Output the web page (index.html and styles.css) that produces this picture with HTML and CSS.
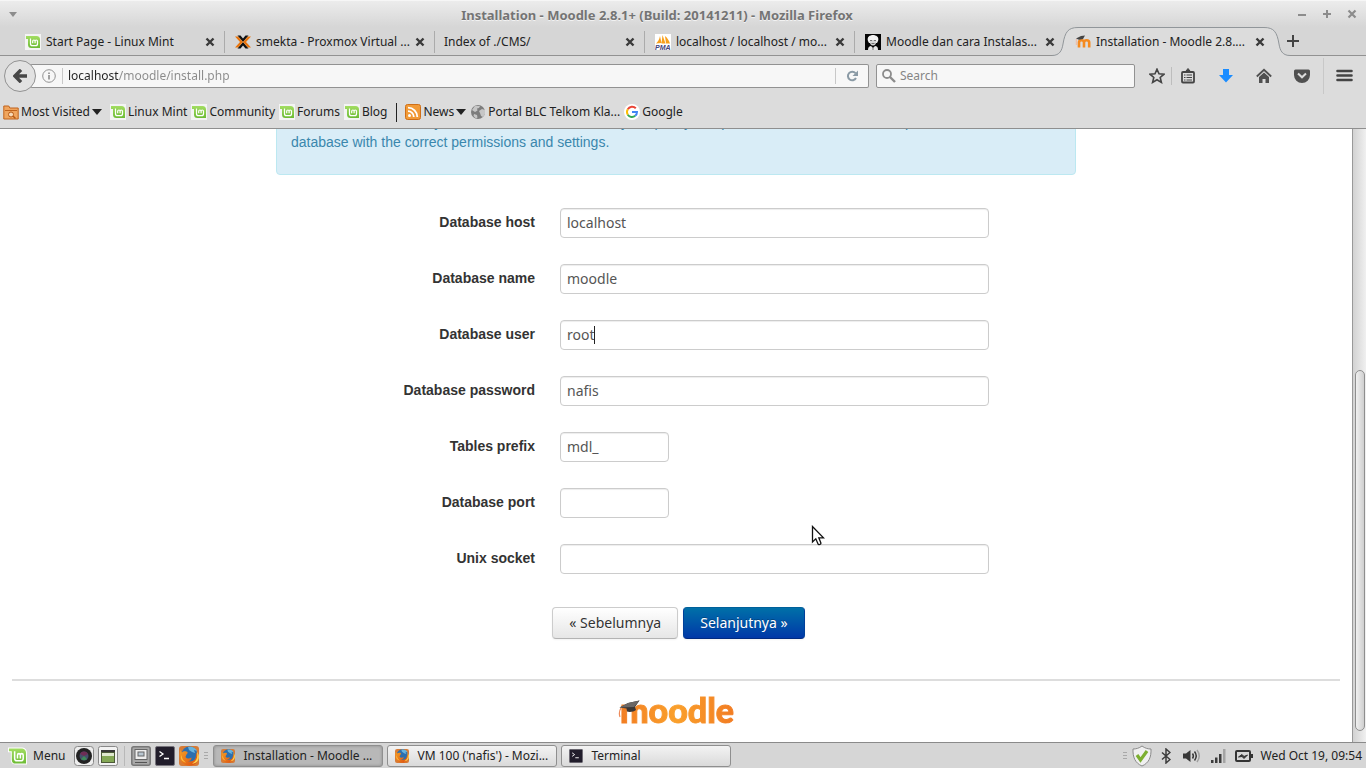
FILE: index.html
```html
<!DOCTYPE html>
<html lang="id">
<head>
<meta charset="utf-8">
<title>Installation - Moodle 2.8.1+ (Build: 20141211) - Mozilla Firefox</title>
<link rel="stylesheet" href="styles.css">
</head>
<body>
<svg class="defs" aria-hidden="true">
  <defs>
    <linearGradient id="g-mint" x1="0" y1="0" x2="0" y2="1"><stop offset="0" stop-color="#a3dd62"/><stop offset="1" stop-color="#6dbb35"/></linearGradient>
    <linearGradient id="g-fox" x1="0" y1="0" x2="1" y2="1"><stop offset="0" stop-color="#f7a325"/><stop offset="1" stop-color="#d9480f"/></linearGradient>
    <symbol id="mint" viewBox="0 0 16 16">
      <rect width="16" height="16" fill="#f4f4f4"/>
      <path d="M1 2h10.500a3.500 3.500 0 0 1 3.500 3.500V14H6.500A3.500 3.500 0 0 1 3 10.500V5H1z" fill="url(#g-mint)"/>
      <path d="M5.500 4.500v5.200a2 2 0 0 0 2 2h3a2 2 0 0 0 2-2V7.200a1.200 1.200 0 0 0-2.400 0v2M10.100 9.200v-2a1.200 1.200 0 0 0-2.400 0v2" fill="none" stroke="#fff" stroke-width="1.200"/>
    </symbol>
    <symbol id="firefox" viewBox="0 0 20 20">
      <rect width="20" height="20" rx="3" fill="#d77b35"/>
      <circle cx="10.500" cy="8.500" r="8" fill="#2c6fae"/>
      <path d="M9 1c4-1 8 1 9 4l-3-1 1 3-3-1-3-2z" fill="#67b4dd"/>
      <path d="M1.500 3c0 2 .5 3 1.500 3.500C4 5 6 5 7.500 5.500 9 6 9 7.500 7.500 8.500L6.500 11c1.500 2 4 2 6 .5 0 3-2 3.500-4 3.500 5 1.500 8-1 8.500-5 .5-2 0-3-.5-4 3 3 3.500 7 1 10.500-3 4-10 4.500-14 .5C0 13.500.2 7 1.500 3z" fill="url(#g-fox)"/>
      <path d="M17.500 5c2 5 .5 10-4.500 12.500 5 .5 8-5 6.500-9z" fill="#ffd34e"/>
      <path d="M2.500 9c.2 3 1.500 6 4.500 7.500C3 16 .8 12.500 2.500 9z" fill="#ffc03d"/>
    </symbol>
    <symbol id="close" viewBox="0 0 10 10"><path d="M1.500 1.500l7 7M8.500 1.500l-7 7" stroke="#3a3a3a" stroke-width="2.400"/></symbol>
    <symbol id="terminal" viewBox="0 0 20 20">
      <rect x=".5" y=".5" width="19" height="19" rx="1.500" fill="#211d2b" stroke="#77747c"/>
      <path d="M4.500 5.500l3.500 2.500-3.500 2.500M9 12.500h5" fill="none" stroke="#fff" stroke-width="1.300"/>
    </symbol>
    <symbol id="down" viewBox="0 0 10 6"><path d="M0 0h10L5 6z" fill="currentColor"/></symbol>
  </defs>
</svg>

<header class="titlebar">
  <svg class="winmenu" viewBox="0 0 10 6"><use href="#down"/></svg>
  <h1 class="wintitle">Installation - Moodle 2.8.1+ (Build: 20141211) - Mozilla Firefox</h1>
  <div class="winbtns">
    <button aria-label="Minimize"><svg viewBox="0 0 10 10"><path d="M1 6h8" stroke="currentColor" stroke-width="2"/></svg></button>
    <button aria-label="Maximize"><svg viewBox="0 0 10 10"><path d="M1 5h8M5 1v8" stroke="currentColor" stroke-width="2"/></svg></button>
    <button aria-label="Close"><svg viewBox="0 0 10 10"><path d="M1.500 1.500l7 7M8.500 1.500l-7 7" stroke="currentColor" stroke-width="2.200"/></svg></button>
  </div>
</header>

<nav class="tabs" aria-label="Tabs">
  <div class="tab"><svg class="fav"><use href="#mint"/></svg><span class="tabname">Start Page - Linux Mint</span><button class="x" aria-label="Close tab"><svg><use href="#close"/></svg></button></div>
  <div class="tab"><svg class="fav" viewBox="0 0 16 16"><path d="M2.500 1.500h3L8 4.500l2.500-3h3L8 8zM2.500 14.500h3L8 11.500l2.500 3h3L8 8z" fill="#111"/><path d="M0 2.500h3L8 8l-5 5.500H0L5 8zM16 2.500h-3L8 8l5 5.500h3L11 8z" fill="#e8740c"/></svg><span class="tabname">smekta - Proxmox Virtual ...</span><button class="x" aria-label="Close tab"><svg><use href="#close"/></svg></button></div>
  <div class="tab"><span class="tabname">Index of ./CMS/</span><button class="x" aria-label="Close tab"><svg><use href="#close"/></svg></button></div>
  <div class="tab"><svg class="fav" viewBox="0 0 16 16"><rect width="16" height="16" fill="#fff"/><path d="M1 9.500C3 8 4.500 5 5 2l1.500 7zM6.500 9.500L7.500 1l3 8.500zM10 2c2.500 2 4 4.500 5 7.500h-4z" fill="#f8a01c"/><text x="0" y="15.500" class="pma">PMA</text></svg><span class="tabname">localhost / localhost / mo...</span><button class="x" aria-label="Close tab"><svg><use href="#close"/></svg></button></div>
  <div class="tab"><svg class="fav" viewBox="0 0 16 16"><rect width="16" height="16" fill="#050505"/><path d="M3 7C1.500 3 5 1 8 1s6.500 2 5 6l-1 2H4z" fill="#f3f3f3"/><path d="M4.500 6.500h7c0 3-1.500 5-3.500 5s-3.500-2-3.500-5z" fill="#d4d4d4"/><path d="M5 6.500h2.200M8.800 6.500H11M6.500 9.500h3" stroke="#555" stroke-width=".8"/><path d="M3 16c0-3 1.500-4 3-4l2 2 2-2c2 0 3 1 3 4z" fill="#e4e4e4"/><path d="M8 13v3" stroke="#777"/></svg><span class="tabname">Moodle dan cara Instalas...</span><button class="x" aria-label="Close tab"><svg><use href="#close"/></svg></button></div>
  <div class="tab active">
    <svg class="shape" viewBox="0 0 238 29"><path d="M0 28.500C8 28.500 10 23 11 17 13 5 16 .5 26 .5H212C222 .5 225 5 227 17 228 23 230 28.500 238 28.500V29H0z" fill="#dcdcdc"/><path d="M0 28.500C8 28.500 10 23 11 17 13 5 16 .5 26 .5H212C222 .5 225 5 227 17 228 23 230 28.500 238 28.500" fill="none" stroke="#91969a"/></svg>
    <svg class="fav" viewBox="0 0 16 16"><path d="M4 13.500V8.500c0-3 5-3 5 0v5M9 8.500c0-3 5.200-3 5.200 0v5" fill="none" stroke="#f58a1f" stroke-width="2.600"/><path d="M1 4.500L6 2l4-.5L8 5l-4 .8z" fill="#444"/><path d="M1.300 5v6" stroke="#f3b9a0"/></svg><span class="tabname">Installation - Moodle 2.8....</span><button class="x" aria-label="Close tab"><svg><use href="#close"/></svg></button></div>
  <button class="newtab" aria-label="New tab"><svg viewBox="0 0 12 12"><path d="M0 6h12M6 0v12" stroke="#444" stroke-width="2"/></svg></button>
</nav>

<div class="navbar">
  <button class="back" aria-label="Back"><svg viewBox="0 0 14 14"><path d="M8 .8L2 7l6 6.200M2 7h12" fill="none" stroke="#474747" stroke-width="3.400"/></svg></button>
  <div class="urlbox">
    <svg class="info" viewBox="0 0 14 14"><circle cx="7" cy="7" r="6.300" fill="none" stroke="#929292"/><path d="M7 6v4.500M7 3.500v1.500" stroke="#8a8a8a" stroke-width="1.600"/></svg>
    <input class="url" type="text" aria-label="Address" value="localhost/moodle/install.php">
    <button class="reload" aria-label="Reload"><svg viewBox="0 0 12 12"><path d="M9.500 3.200A4.300 4.300 0 1 0 10 8" fill="none" stroke="#8a9aa5" stroke-width="2"/><path d="M12 .5V6H6.500z" fill="#8a9aa5"/></svg></button>
  </div>
  <div class="searchbox">
    <svg viewBox="0 0 14 14"><circle cx="5" cy="5" r="4" fill="none" stroke="#8c8c8c" stroke-width="1.800"/><path d="M8 8l5 5" stroke="#8c8c8c" stroke-width="2.400"/></svg>
    <input type="text" aria-label="Search" placeholder="Search">
  </div>
  <div class="tools">
    <button class="star" aria-label="Bookmark"><svg viewBox="0 0 16 16"><path d="M8 1.200l2 4.600 5 .4-3.800 3.300 1.200 4.900L8 11.800l-4.400 2.600 1.200-4.900L1 6.200l5-.4z" fill="none" stroke="#444" stroke-width="1.600"/></svg></button>
    <button aria-label="Bookmarks list"><svg viewBox="0 0 16 16"><rect x="2" y="4" width="12" height="10.500" rx="1" fill="none" stroke="#444" stroke-width="1.800"/><path d="M6 3l2-2.500L10 3z" stroke="#444" fill="#444"/><path d="M4 7h1.500M4 9.500h1.500M4 12h1.500M6.500 7H12M6.500 9.500H12M6.500 12H12" stroke="#444" stroke-width="1.200"/></svg></button>
    <button aria-label="Downloads"><svg viewBox="0 0 16 16"><path d="M5 1h6v6h4l-7 7.500L1 7h4z" fill="#1a8cff"/></svg></button>
    <button aria-label="Home"><svg viewBox="0 0 16 16"><path d="M.8 8.500L8 1.800l7.200 6.700" fill="none" stroke="#505050" stroke-width="1.800"/><path d="M3 9l5-4.600L13 9v6H9.500v-4h-3v4H3z" fill="#505050"/></svg></button>
    <button aria-label="Pocket"><svg viewBox="0 0 16 16"><path d="M1.500 1.500h13a1.500 1.500 0 0 1 1.500 1.500v4a8 8 0 0 1-16 0V3a1.500 1.500 0 0 1 1.500-1.500z" fill="#505050"/><path d="M4 5.500L8 9.300l4-3.800" fill="none" stroke="#dcdcdc" stroke-width="2"/></svg></button>
    <button class="menu" aria-label="Open menu"><svg viewBox="0 0 16 16"><path d="M1 3h14M1 7.500h14M1 12h14" stroke="#444" stroke-width="2.600" stroke-linecap="round"/></svg></button>
  </div>
</div>

<nav class="bookmarks" aria-label="Bookmarks">
  <button class="bm first"><svg viewBox="0 0 16 16"><path d="M.8 15V2h5l1 2h8.400v11z" fill="#f0a55e" stroke="#c0631c"/><path d="M2 6.500h12" stroke="#c0631c"/><circle cx="8" cy="10.500" r="2.500" fill="#f7d9b8" stroke="#b75a15"/><path d="M10 12l2.500 2.500" stroke="#b75a15" stroke-width="1.500"/></svg>Most Visited<svg class="dd"><use href="#down"/></svg></button>
  <a class="bm" href="#"><svg><use href="#mint"/></svg>Linux Mint</a>
  <a class="bm" href="#"><svg><use href="#mint"/></svg>Community</a>
  <a class="bm" href="#"><svg><use href="#mint"/></svg>Forums</a>
  <a class="bm" href="#"><svg><use href="#mint"/></svg>Blog</a>
  <span class="bmsep"></span>
  <button class="bm news"><svg viewBox="0 0 16 16"><rect x=".5" y=".5" width="15" height="15" rx="2" fill="#f19a37" stroke="#cf6e17"/><circle cx="4.500" cy="11.500" r="1.500" fill="#fff"/><path d="M3 7.200A5.800 5.800 0 0 1 8.800 13M3 3.700A9.300 9.300 0 0 1 12.300 13" fill="none" stroke="#fff" stroke-width="1.800"/></svg>News<svg class="dd"><use href="#down"/></svg></button>
  <a class="bm" href="#"><svg viewBox="0 0 16 16"><circle cx="8" cy="8" r="7" fill="#7d7d7d"/><path d="M5 1.800l5 .2-1 2-2 .5.5 2L5 8 2 6zM9 7l3-2 3 1v4l-2 3-2-1-1-3zM4 10l3 1 .5 2.500L6 14.500 3.500 12z" fill="#c6c6c6"/></svg>Portal BLC Telkom Kla...</a>
  <a class="bm" href="#"><svg viewBox="0 0 16 16"><circle cx="8" cy="8" r="8" fill="#fff"/><path d="M3.800 5.300A5 5 0 0 1 11.800 4.300" fill="none" stroke="#ea4335" stroke-width="2"/><path d="M3.800 5.300a5 5 0 0 0 0 5.400" fill="none" stroke="#fbbc05" stroke-width="2"/><path d="M3.800 10.700a5 5 0 0 0 7.400 1.100" fill="none" stroke="#34a853" stroke-width="2"/><path d="M8 8h5a5 5 0 0 1-1.800 3.800" fill="none" stroke="#4285f4" stroke-width="2"/></svg>Google</a>
</nav>

<div class="viewport">
  <main class="page">
    <div class="alert">If the database currently does not exist, and the user you specify has permission, Moodle will attempt to create a new database with the correct permissions and settings.</div>
    <form class="form">
      <label for="host">Database host</label><div class="field"><input id="host" type="text" value="localhost"></div>
      <label for="name">Database name</label><div class="field"><input id="name" type="text" value="moodle"></div>
      <label for="user">Database user</label><div class="field"><input id="user" type="text" value="root"><span class="caret"></span></div>
      <label for="pass">Database password</label><div class="field"><input id="pass" type="text" value="nafis"></div>
      <label for="prefix">Tables prefix</label><div class="field short"><input id="prefix" type="text" value="mdl_"></div>
      <label for="port">Database port</label><div class="field short"><input id="port" type="text"></div>
      <label for="socket">Unix socket</label><div class="field"><input id="socket" type="text"></div>
    </form>
    <div class="actions">
      <button class="btn">« Sebelumnya</button>
      <button class="btn primary">Selanjutnya »</button>
    </div>
    <footer class="foot">
      <a class="logo" href="#">moodle<svg class="cap" viewBox="0 0 22 18"><path d="M1.500 7.500L10 3 21.500 .5 17 7l1 3c-2 2-7 2.500-9 1.500l-.5-3z" fill="#3b3735"/><path d="M1.500 7.500L10 3l11.500-2.500L16 7z" fill="#6b6765"/><path d="M3 8c-2 3-2 6-1 9" fill="none" stroke="#ee8a5a" stroke-width="1.200"/></svg></a>
    </footer>
  </main>
  <div class="scroll"><div class="thumb"></div></div>
  <svg class="cursor" viewBox="0 0 14 21"><path d="M1.500 1.500V17l3.300-3.200 2.400 5.400c1.500 1 3-.2 2.600-1.500L7.800 12.800h4.700z" fill="#fff" stroke="#111" stroke-width="1.300"/></svg>
</div>

<footer class="taskbar">
  <button class="start"><svg viewBox="0 0 20 18"><path d="M0 0h13.500C18 0 20 2 20 6v12H8c-3.500 0-5-2-5-5V5H0z" fill="#fff"/><path d="M1 1h12.500C17.500 1 19 3 19 6v11H8c-3 0-4-1.500-4-4V4H1z" fill="url(#g-mint)"/><path d="M7 4v7.500c0 1.500 1 2.500 2.500 2.500h4c1.500 0 2.500-1 2.500-2.500V8c0-2-3-2-3 0v3.500M13 8c0-2-3-2-3 0v3.500" fill="none" stroke="#fff" stroke-width="1.600"/></svg>Menu</button>
  <div class="launch">
    <button aria-label="Camera"><svg viewBox="0 0 20 20"><rect x=".5" y=".5" width="19" height="19" rx="3" fill="#eee" stroke="#888"/><circle cx="10" cy="10" r="8" fill="#222"/><circle cx="10" cy="10" r="4.500" fill="#46506a"/><path d="M6 8a4.500 4.500 0 0 1 8 0l-4 2z" fill="#6f2d55"/><path d="M7 13a4.500 4.500 0 0 0 6 0l-3-3z" fill="#3e8b59"/></svg></button>
    <button aria-label="Show desktop"><svg viewBox="0 0 20 20"><rect x=".5" y=".5" width="19" height="19" rx="2" fill="#f2f2f2" stroke="#888"/><rect x="3" y="4" width="14" height="3" fill="#373737"/><rect x="3.500" y="6.500" width="13" height="10" fill="#dfe8cf" stroke="#4c5a38"/><rect x="4" y="10" width="12" height="6" fill="#84a856"/></svg></button>
  </div>
  <span class="tsep"></span>
  <div class="launch">
    <button aria-label="Files"><svg viewBox="0 0 20 20"><rect x=".8" y=".8" width="18.400" height="18.400" rx="2" fill="#a8a8a8" stroke="#777" stroke-width="1.500"/><rect x="4" y="3.500" width="12" height="10" fill="#eee" stroke="#666"/><rect x="7" y="6" width="6" height="4" fill="#b9c7d2" stroke="#666"/><path d="M4 16.500h12" stroke="#555"/></svg></button>
    <button aria-label="Terminal"><svg><use href="#terminal"/></svg></button>
    <button aria-label="Firefox"><svg><use href="#firefox"/></svg></button>
  </div>
  <span class="grip"></span>
  <div class="tasks">
    <button class="task on"><svg><use href="#firefox"/></svg>Installation - Moodle ...</button>
    <button class="task"><svg><use href="#firefox"/></svg>VM 100 ('nafis') - Mozi...</button>
    <button class="task"><svg><use href="#terminal"/></svg>Terminal</button>
  </div>
  <div class="tray">
    <span class="grip"></span>
    <svg class="shield" viewBox="0 0 20 22"><path d="M10 1c3 2.300 6 3 9 3 .3 8-2 14-9 17C3 18 .7 12 1 4c3 0 6-.7 9-3z" fill="#f0f0f0" stroke="#8a8a8a"/><path d="M5 10l3.500 5L15 6" fill="none" stroke="#7caf30" stroke-width="3.200"/></svg>
    <svg class="bt" viewBox="0 0 10 16"><path d="M1 4.500l8 7L5 15V1l4 3.500-8 7" fill="none" stroke="#3c3c3c" stroke-width="1.500"/></svg>
    <svg class="vol" viewBox="0 0 18 14"><path d="M0 4.500h3L7.500 1v12L3 9.500H0z" fill="#383838"/><path d="M9.500 4.500q1.800 2.500 0 5M11.500 2.500q3.500 4.500 0 9" fill="none" stroke="#383838" stroke-width="1.500"/><path d="M14 1q4.500 6 0 12" fill="none" stroke="#a0a0a0" stroke-width="1.500"/></svg>
    <svg class="sig" viewBox="0 0 15 14"><path d="M0 11h2.500v3H0zM4 8.500h2.500V14H4zM8 5h2.500v9H8z" fill="#3c3c3c"/><path d="M12 0h2.500v14H12z" fill="#a4a4a4"/></svg>
    <svg class="bat" viewBox="0 0 18 12"><rect x="1" y="1" width="14" height="10" rx="1" fill="none" stroke="#333" stroke-width="2"/><path d="M16 4h2v4h-2z" fill="#333"/><path d="M3.500 7L7 4.500 9 6.500 12.500 5 9 8.500l-2-2z" fill="#333" stroke="#333"/></svg>
    <time>Wed Oct 19, 09:54</time>
  </div>
</footer>
</body>
</html>
```
FILE: styles.css
```css
* { box-sizing: border-box; }
body {
  margin: 0;
  height: 100vh;
  display: flex;
  flex-direction: column;
  overflow: hidden;
  background: #dcdcdc;
  color: #222;
  font: 12px/16px "Noto Sans", sans-serif;
}
button {
  font: inherit;
  color: inherit;
  background: none;
  border: 0;
  padding: 0;
  display: flex;
  align-items: center;
  justify-content: center;
}
a { color: inherit; text-decoration: none; }
input { font: inherit; border: 0; outline: 0; background: none; padding: 0; min-width: 0; }
svg { display: block; flex: none; }
.defs { position: absolute; width: 0; height: 0; }

/* Window frame */
.titlebar {
  flex: none;
  height: 27px;
  display: grid;
  grid-template-columns: 70px 1fr 70px;
  align-items: center;
  background: linear-gradient(#ececec, #d6d6d6);
  border-top: 1px solid #f6f6f6;
  color: #8c8c8c;
}
.winmenu { width: 8px; height: 5px; margin-left: 9px; }
.wintitle {
  margin: 2px 0 0;
  padding-right: 52px;
  font-size: 13px;
  font-weight: 700;
  line-height: 20px;
  text-align: center;
  color: #747474;
  text-shadow: 0 1px 0 #f2f2f2;
  white-space: nowrap;
}
.winbtns { display: flex; gap: 15px; justify-content: flex-end; padding-right: 9px; }
.winbtns svg { width: 10px; height: 10px; }

/* Tabs */
.tabs {
  flex: none;
  height: 29px;
  display: flex;
  padding-left: 15px;
  background: #d6d6d6;
  border-bottom: 1px solid #929292;
}
.tab {
  position: relative;
  flex: 0 1 210px;
  min-width: 0;
  display: flex;
  align-items: center;
  padding: 1px 10px 0 10px;
}
.tab::after {
  content: "";
  position: absolute;
  right: 0;
  top: 4px;
  bottom: 2px;
  width: 1px;
  background: #ababab;
}
.tab:nth-child(5)::after, .tab.active::after { display: none; }
.tab:nth-child(3) { padding-left: 9px; }
.fav { position: relative; width: 16px; height: 16px; margin-right: 5px; }
.pma { font: italic bold 7px "Liberation Sans", sans-serif; fill: #44427a; }
.tabname { position: relative; flex: 1; min-width: 0; white-space: nowrap; }
.x { position: relative; }
.x svg { width: 10px; height: 10px; }
.shape { position: absolute; left: -13px; top: 0; width: 238px; height: 29px; }
.newtab { margin-left: 12px; }
.newtab svg { width: 12px; height: 12px; }

/* Navigation */
.navbar {
  flex: none;
  height: 40px;
  display: flex;
  align-items: center;
  padding: 0 1px 0 4px;
}
.back {
  position: relative;
  width: 32px;
  height: 32px;
  border: 1px solid #929292;
  border-radius: 50%;
  background: #e2e2e2;
}
.back svg { width: 14px; height: 14px; }
.urlbox, .searchbox {
  height: 24px;
  display: flex;
  align-items: center;
  background: #f7f7f7;
  border: 1px solid #929292;
  border-radius: 2px;
}
.urlbox { flex: 1; margin-left: -6px; padding-left: 12px; border-left: 0; }
.info { width: 14px; height: 14px; margin-right: 6px; }
.url {
  flex: 1;
  height: 16px;
  border-left: 1px solid #c8c8c8;
  padding-left: 5px;
}
.urlbox .url {
  background: linear-gradient(90deg, #222 56px, #8a8a8a 56px);
  -webkit-background-clip: text;
  background-clip: text;
  -webkit-text-fill-color: transparent;
}
.reload { width: 33px; height: 16px; border-left: 1px solid #c8c8c8; }
.reload svg { width: 12px; height: 12px; }
.searchbox { width: 259px; margin-left: 7px; padding-left: 5px; }
.searchbox svg { width: 14px; height: 14px; margin-right: 4px; }
.searchbox input { flex: 1; }
.searchbox input::placeholder { color: #858585; opacity: 1; }
.tools { display: flex; align-items: center; margin-left: 7px; }
.tools button { width: 38px; height: 36px; }
.tools svg { width: 16px; height: 16px; }
.tools .star { width: 30px; height: 18px; border-right: 1px solid #bdbdbd; }
.tools .star + button { width: 32px; margin-right: 3px; }
.tools .menu { width: 42px; margin-left: 2px; border-left: 1px solid #c8c8c8; }
.tools .menu svg { width: 17px; }

/* Bookmarks */
.bookmarks {
  flex: none;
  height: 33px;
  display: flex;
  align-items: center;
  padding: 0 3px;
  border-bottom: 1px solid #8f8f8f;
  line-height: 18px;
  white-space: nowrap;
}
.bm { display: flex; align-items: center; margin-right: 4px; }
.bm svg { width: 16px; height: 16px; margin-right: 2px; }
.bm .dd { width: 10px; height: 6px; margin: 0 0 0 2px; }
.bm.first { margin-right: 8px; }
.bmsep { width: 1px; height: 19px; margin: 0 8px 0 5px; background: #222; }

/* Web page */
.viewport {
  position: relative;
  flex: 1;
  min-height: 0;
  display: flex;
  overflow: hidden;
  background: #fff;
}
.page {
  flex: 1;
  display: flex;
  flex-direction: column;
  justify-content: flex-end;
  padding: 0 12px 16px;
  font: 14px/20px "Liberation Sans", Arial, sans-serif;
}
.alert {
  width: 800px;
  margin: 0 auto 33px;
  padding: 8px 14px 22px;
  color: #3a87ad;
  background: #d9edf7;
  border: 1px solid #bce8f1;
  border-radius: 4px;
}
.form {
  display: grid;
  grid-template-columns: 259px 429px;
  gap: 26px 25px;
  width: 800px;
  margin: 0 auto;
}
.form label {
  padding-top: 4px;
  font-weight: 700;
  text-align: right;
  color: #333;
}
.field { position: relative; height: 30px; }
.field input {
  width: 100%;
  height: 30px;
  padding: 0 6px 2px;
  font: 14px/20px "Noto Sans", sans-serif;
  color: #555;
  background: #fff;
  border: 1px solid #ccc;
  border-radius: 4px;
  box-shadow: inset 0 1px 1px rgba(0, 0, 0, .075);
}
.short { width: 109px; }
.caret { position: absolute; left: 34px; top: 6px; width: 1px; height: 18px; background: #222; }
.actions { display: flex; justify-content: center; gap: 5px; padding: 33px 0 40px 5px; }
.btn {
  height: 32px;
  padding: 0 16px;
  border: 1px solid #ccc;
  font: 14px/20px "Noto Sans", sans-serif;
  color: #333;
  text-shadow: 0 1px 1px rgba(255, 255, 255, .75);
  background: linear-gradient(#fff, #e6e6e6);
  border-bottom-color: #b3b3b3;
  border-radius: 4px;
  box-shadow: 0 1px 2px rgba(0, 0, 0, .05);
}
.primary {
  color: #fff;
  text-shadow: 0 -1px 0 rgba(0, 0, 0, .25);
  background: linear-gradient(#0070a8, #0038a8);
  border-color: #00609a #00409a #002a80;
}
.foot {
  display: flex;
  justify-content: center;
  padding-top: 13px;
  border-top: 2px solid #ddd;
}
.logo {
  position: relative;
  padding-left: 2px;
  font: 900 34px/32px Lato, sans-serif;
  color: transparent;
  -webkit-text-stroke: 1px transparent;
  background: linear-gradient(90deg, #f27c22, #faa02c 50%, #f27c22);
  -webkit-background-clip: text;
  background-clip: text;
}
.cap { position: absolute; left: 0; top: 6px; width: 22px; height: 18px; }
.scroll {
  width: 14px;
  display: flex;
  flex-direction: column;
  justify-content: flex-end;
  align-items: center;
  padding-bottom: 11px;
  border-left: 1px solid #999;
  background: linear-gradient(90deg, #d2d2d2, #f0f0f0);
}
.thumb {
  width: 10px;
  height: 60%;
  border: 1px solid #8e8e8e;
  border-radius: 5px;
  background: linear-gradient(90deg, #f0f0f0, #cfcfcf);
}
.cursor { position: absolute; left: 811px; top: 396px; width: 14px; height: 21px; }

/* Desktop panel */
.taskbar {
  flex: none;
  height: 26px;
  display: flex;
  align-items: center;
  padding: 0 4px 0 8px;
  border-top: 1px solid #8a8a8a;
  background: #d6d6d6;
  white-space: nowrap;
}
.start { gap: 6px; }
.start svg { width: 19px; height: 18px; }
.launch { display: flex; gap: 4px; }
.start + .launch { margin-left: 9px; }
.launch svg { width: 20px; height: 20px; }
.tsep { width: 1px; height: 20px; margin: 0 6px; background: #f4f4f4; border-left: 1px solid #b8b8b8; }
.grip {
  width: 4px;
  height: 8px;
  margin: 0 5px;
  background: repeating-linear-gradient(#a8a8a8 0 1px, #d6d6d6 1px 3px);
}
.tasks { display: flex; gap: 4px; }
.task {
  width: 170px;
  height: 22px;
  justify-content: flex-start;
  gap: 8px;
  padding: 0 7px;
  border: 1px solid #8f8f8f;
  border-radius: 3px;
  background: linear-gradient(#f3f3f3, #dadada);
}
.task svg { width: 14px; height: 14px; }
.task.on { background: #b8b8b8; box-shadow: inset 0 0 3px #888; }
.tray { display: flex; align-items: center; margin-left: auto; }
.shield { width: 20px; height: 22px; }
.bt { width: 10px; height: 16px; margin-left: 9px; }
.vol { width: 18px; height: 14px; margin-left: 12px; }
.sig { width: 15px; height: 14px; margin-left: 10px; }
.bat { width: 18px; height: 12px; margin: 0 7px 0 9px; }
```
